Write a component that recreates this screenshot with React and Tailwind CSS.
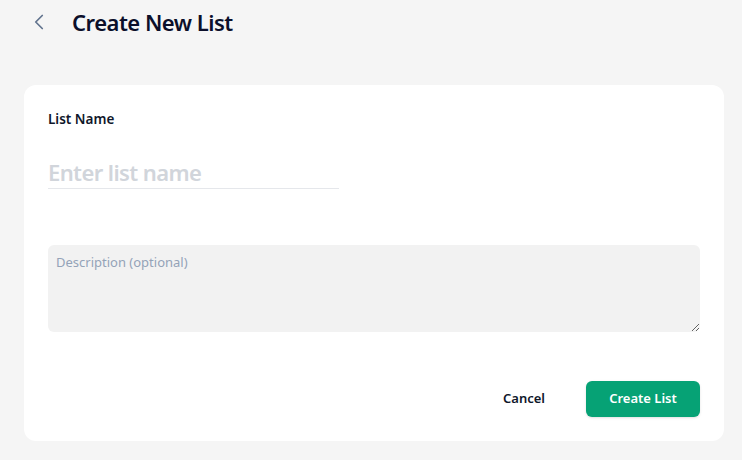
import React from 'react'
import { ChevronLeft } from 'lucide-react'

const App = () => {
  return (
    <div className="min-h-screen bg-[#f5f5f5] pl-6 pr-[18px] font-['Segoe_UI','Noto_Sans',sans-serif]">
      {/* Header */}
      <div className="flex items-center h-[44px]">
        <button className="ml-[2px] w-[40px] h-[28px] flex items-center text-slate-500">
          <ChevronLeft size={26} strokeWidth={1.6} />
        </button>
        <h1 className="ml-[6px] text-[22px] font-semibold text-[#0b0f2a] tracking-[-0.5px]">Create New List</h1>
      </div>

      {/* Card */}
      <div className="mt-[41px] bg-white rounded-xl p-6">
        <label className="block text-[13.5px] leading-5 font-semibold text-[#0f172a]">List Name</label>
        <input
          type="text"
          placeholder="Enter list name"
          className="mt-[20px] block w-[291px] h-[40px] pt-[6px] border-b border-[#e5e7eb] text-[22px] font-semibold outline-none placeholder:text-[#d1d5db] tracking-[-0.6px]"
        />
        <textarea
          placeholder="Description (optional)"
          className="mt-[56px] block w-full h-[87px] rounded-md bg-[#f2f2f2] px-2 py-2 text-[13px] outline-none placeholder:text-[#94a3b8]"
        />
        <div className="mt-[49px] flex justify-end items-center">
          <button className="h-[36px] px-5 text-[13px] font-semibold text-[#0f172a]">Cancel</button>
          <button className="ml-[21px] h-[36px] w-[114px] rounded-md bg-[#06a275] text-white text-[13px] font-semibold shadow-sm">
            Create List
          </button>
        </div>
      </div>
    </div>
  )
}

export default App
